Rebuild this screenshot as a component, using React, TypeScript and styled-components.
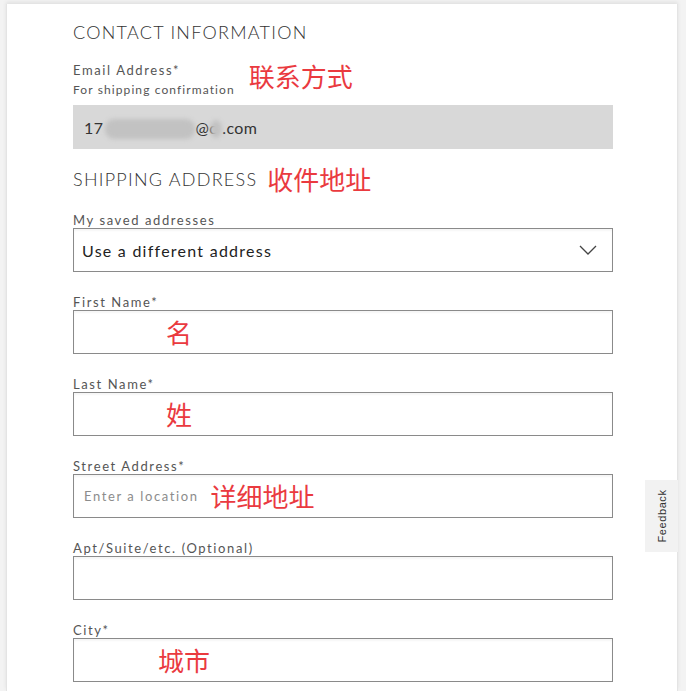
import styled, { createGlobalStyle } from "styled-components";

const GlobalStyle = createGlobalStyle`
  html, body {
    margin: 0;
    padding: 0;
    background: #f3f3f3;
  }
  * {
    box-sizing: border-box;
  }
`;

const Page = styled.div`
  position: relative;
  width: 686px;
  height: 691px;
  overflow: hidden;
  background: #f3f3f3;
  padding: 4px 8px 0 6px;
  font-family: Lato, "Noto Sans", "Noto Sans CJK SC", sans-serif;
`;

const Card = styled.section`
  height: 100%;
  background: #fff;
  border-left: 1px solid #e4e4e4;
  border-right: 1px solid #e4e4e4;
  box-shadow: 0 -2px 4px rgba(0, 0, 0, 0.08);
  padding: 17px 0 0 66px;
`;

const Content = styled.div`
  width: 540px;
  display: flex;
  flex-direction: column;
`;

const SectionTitle = styled.h2`
  margin: 0;
  display: flex;
  align-items: center;
  gap: 10px;
  font-size: 18px;
  line-height: 22px;
  font-weight: 300;
  letter-spacing: 1.25px;
  color: #333;
  margin-top: ${({ $top }: { $top?: number }) => $top ?? 0}px;
`;

const Note = styled.span`
  font-family: "Noto Sans CJK SC", sans-serif;
  font-size: 26px;
  line-height: 28px;
  font-weight: 400;
  letter-spacing: 0;
  color: #ea3a3f;
`;

const LabelRow = styled.div`
  display: flex;
  align-items: flex-start;
  gap: 14px;
  margin-top: 19px;
`;

const LabelStack = styled.div`
  display: flex;
  flex-direction: column;
`;

const Label = styled.label`
  font-size: 13px;
  line-height: 16px;
  letter-spacing: 1.6px;
  color: #555;
`;

const Hint = styled.span`
  font-size: 12px;
  line-height: 17px;
  letter-spacing: 1.1px;
  color: #555;
  margin-top: 3px;
`;

const EmailBox = styled.div`
  margin-top: 7px;
  height: 44px;
  background: #d8d8d8;
  display: flex;
  align-items: center;
  padding-left: 11px;
  font-size: 16px;
  letter-spacing: 0.4px;
  color: #333;
`;

const Blur = styled.span<{ $w: number; $shift: number; $round?: boolean }>`
  display: inline-block;
  width: ${({ $w }) => $w}px;
  height: ${({ $round }) => ($round ? 18 : 20)}px;
  margin: 3px 0 0 ${({ $shift }) => $shift}px;
  border-radius: ${({ $round }) => ($round ? "50%" : "9px")};
  background: #c2c2c2;
  filter: blur(2px);
`;

const Field = styled.div`
  display: flex;
  flex-direction: column;
  margin-top: ${({ $top }: { $top?: number }) => $top ?? 22}px;
`;

const Box = styled.div<{ $indent?: number }>`
  height: 44px;
  border: 1px solid #8a8a8a;
  background: #fff;
  box-shadow: inset 0 2px 2px rgba(0, 0, 0, 0.04);
  display: flex;
  align-items: center;
  padding-left: ${({ $indent }) => $indent ?? 10}px;
  padding-right: 15px;
  gap: 12px;
`;

const SelectText = styled.span`
  flex: 1;
  font-size: 16px;
  letter-spacing: 1.25px;
  color: #222;
`;

const Placeholder = styled.span`
  font-size: 13px;
  letter-spacing: 1.6px;
  color: #8c8c8c;
`;

const FeedbackTab = styled.div`
  position: absolute;
  right: 8px;
  top: 480px;
  width: 33px;
  height: 72px;
  background: #f2f2f2;
  display: flex;
  align-items: center;
  justify-content: center;
`;

const FeedbackText = styled.span`
  transform: rotate(-90deg);
  font-family: "Liberation Sans", Arial, sans-serif;
  font-size: 11px;
  letter-spacing: 0.6px;
  color: #333;
  white-space: nowrap;
`;

const Chevron = () => (
  <svg width="18" height="10" viewBox="0 0 18 10" fill="none">
    <path d="M1 1l8 8 8-8" stroke="#444" strokeWidth="1.3" />
  </svg>
);

const fields = [
  { label: "First Name*", note: "名", indent: 92 },
  { label: "Last Name*", note: "姓", indent: 92 },
  { label: "Street Address*", placeholder: "Enter a location", note: "详细地址", indent: 10 },
  { label: "Apt/Suite/etc. (Optional)" },
  { label: "City*", note: "城市", indent: 84 },
];

export default function App() {
  return (
    <Page>
      <GlobalStyle />
      <Card>
        <Content>
          <SectionTitle>CONTACT INFORMATION</SectionTitle>
          <LabelRow>
            <LabelStack>
              <Label>Email Address*</Label>
              <Hint>For shipping confirmation</Hint>
            </LabelStack>
            <Note>联系方式</Note>
          </LabelRow>
          <EmailBox>
            17<Blur $w={90} $shift={2} />@c<Blur $w={12} $shift={-7} $round />.com
          </EmailBox>

          <SectionTitle $top={16}>
            SHIPPING ADDRESS<Note>收件地址</Note>
          </SectionTitle>
          <Field $top={19}>
            <Label>My saved addresses</Label>
            <Box $indent={8}>
              <SelectText>Use a different address</SelectText>
              <Chevron />
            </Box>
          </Field>

          {fields.map((f) => (
            <Field key={f.label}>
              <Label>{f.label}</Label>
              <Box $indent={f.indent}>
                {f.placeholder && <Placeholder>{f.placeholder}</Placeholder>}
                {f.note && <Note>{f.note}</Note>}
              </Box>
            </Field>
          ))}
        </Content>
      </Card>
      <FeedbackTab>
        <FeedbackText>Feedback</FeedbackText>
      </FeedbackTab>
    </Page>
  );
}
